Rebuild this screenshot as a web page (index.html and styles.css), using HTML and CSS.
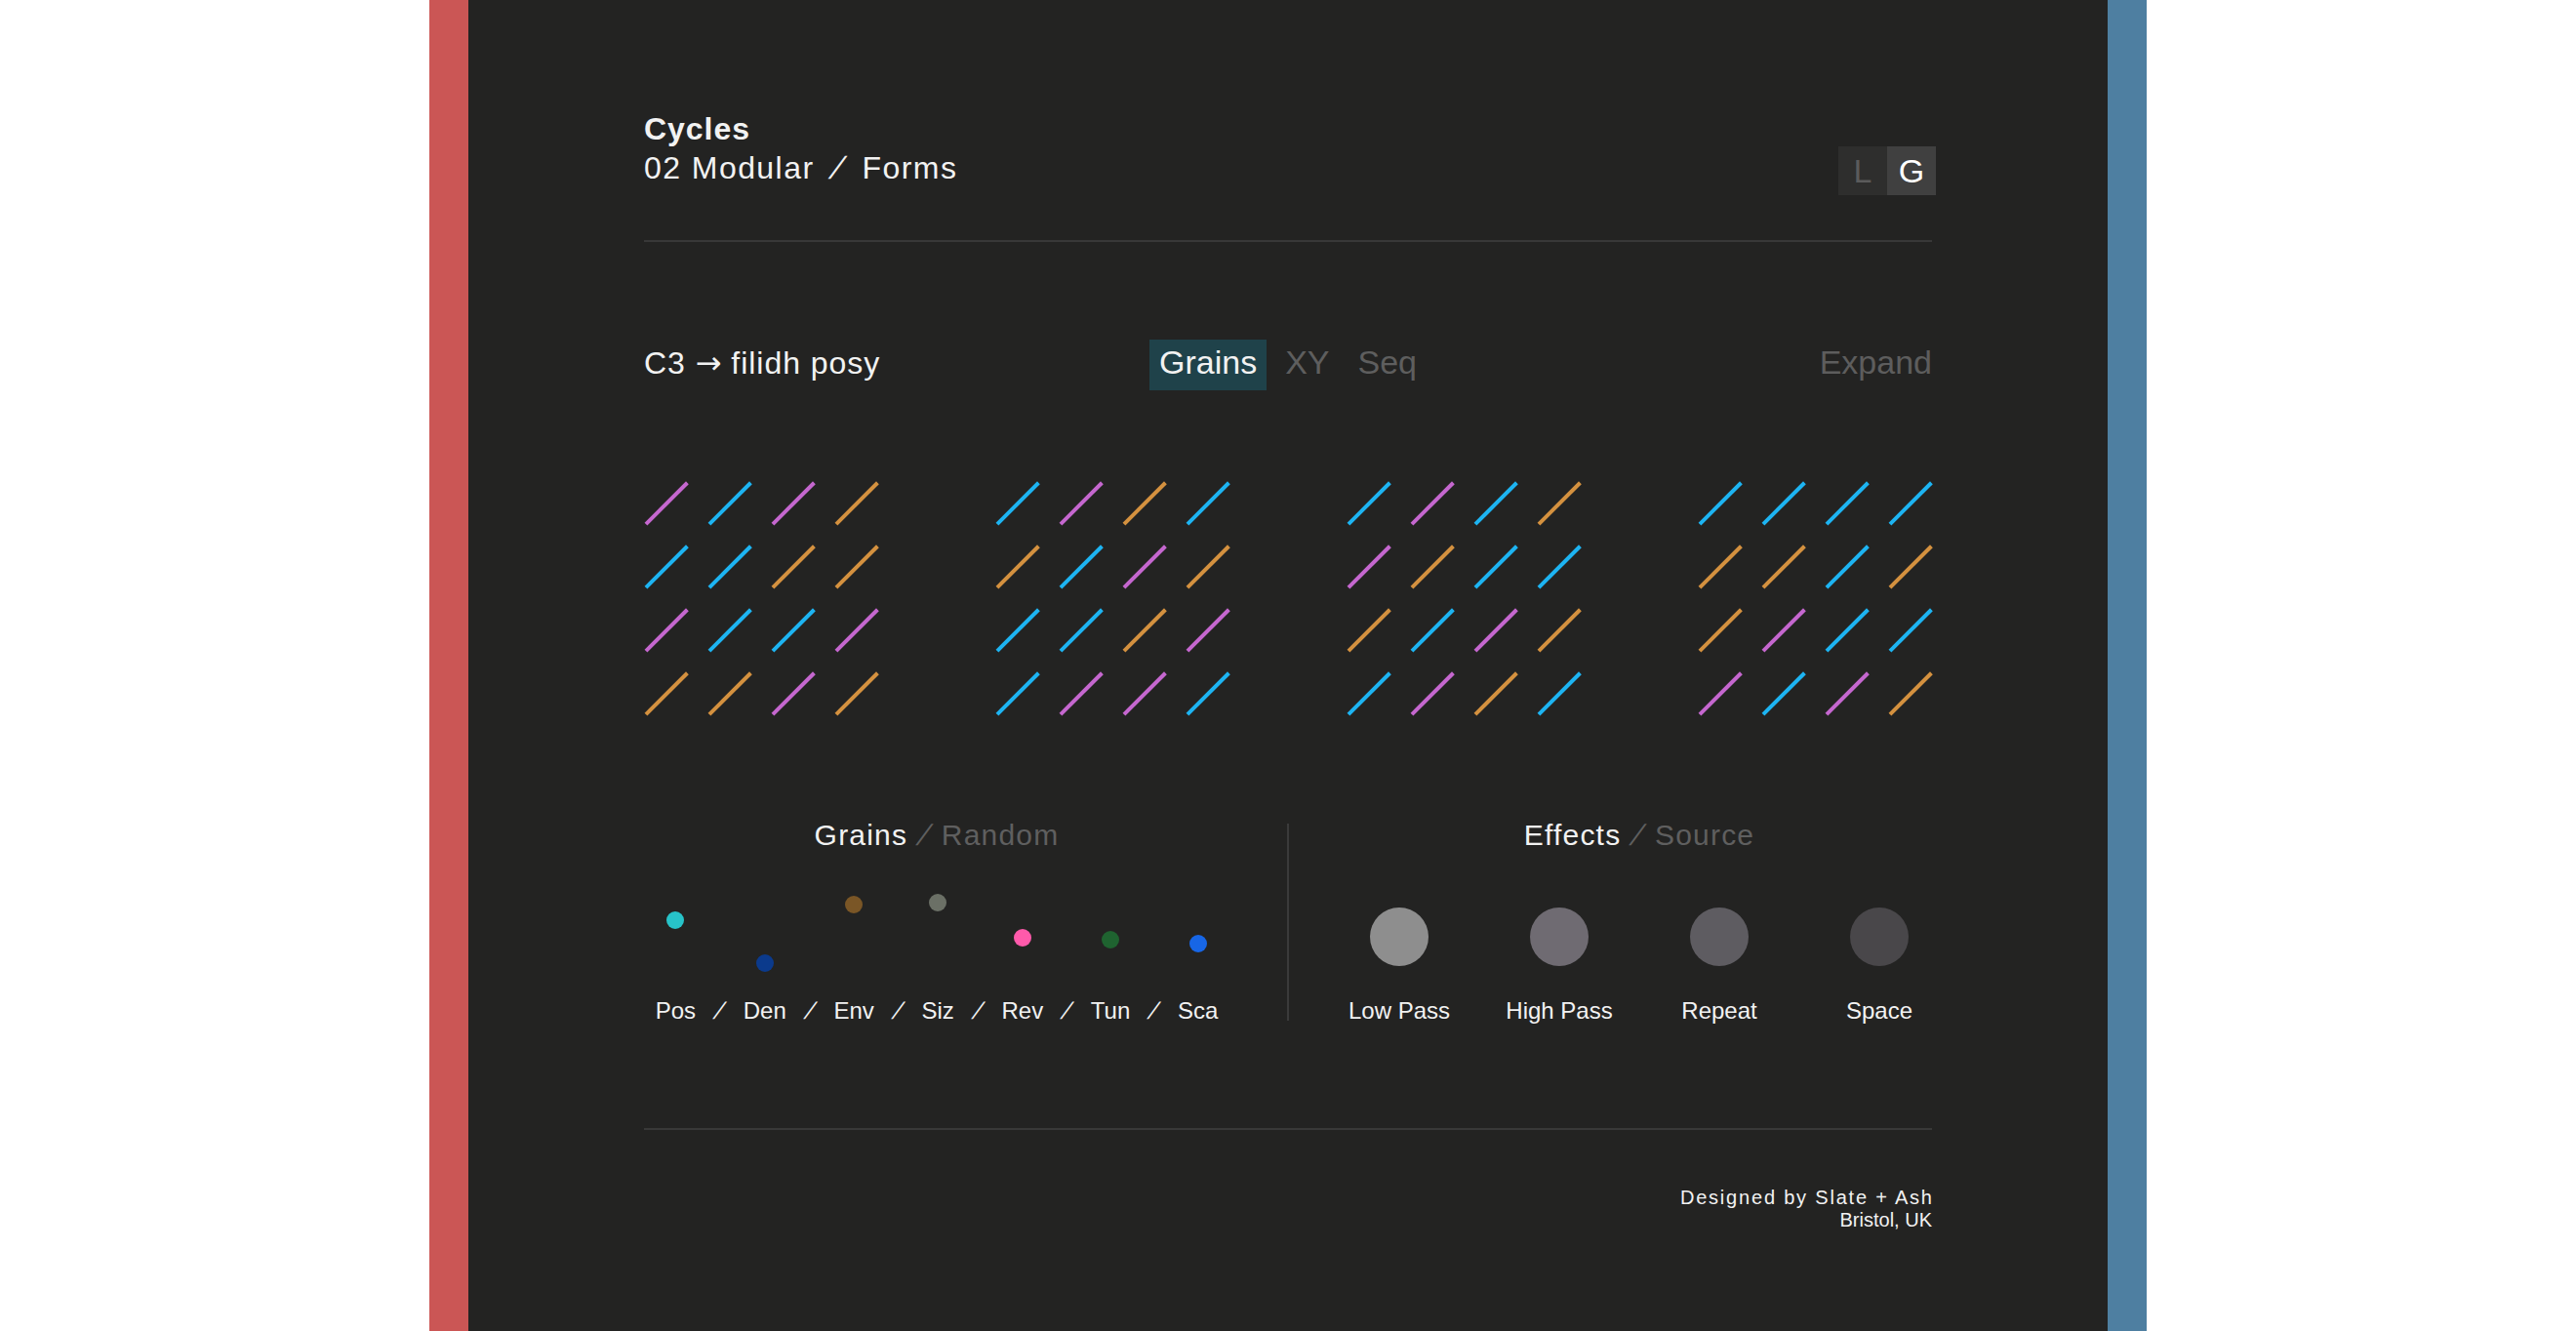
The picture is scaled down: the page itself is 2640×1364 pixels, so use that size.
FILE: index.html
```html
<!DOCTYPE html>
<html lang="en">
<head>
  <meta charset="UTF-8" />
  <title>Cycles - 02 Modular / Forms</title>
  <link rel="stylesheet" href="styles.css">
</head>
<body>

<div class="frame">

  <!-- Header -->
  <header class="head">
    <div class="title">
      <h1>Cycles</h1>
      <p>02 Modular <span class="sep">/</span> Forms</p>
    </div>
    <div class="mode">
      <span class="mode-btn">L</span>
      <span class="mode-btn is-on">G</span>
    </div>
  </header>

  <!-- Patch bar -->
  <section class="bar">
    <div class="patch">C3 <span class="arrow">→</span> filidh posy</div>
    <nav class="tabs">
      <span class="tab is-on">Grains</span>
      <span class="tab">XY</span>
      <span class="tab">Seq</span>
    </nav>
    <span class="expand">Expand</span>
  </section>

  <!-- Pads -->
  <section class="pads">
    <div class="pad">
      <i class="ln p"></i><i class="ln b"></i><i class="ln p"></i><i class="ln o"></i>
      <i class="ln b"></i><i class="ln b"></i><i class="ln o"></i><i class="ln o"></i>
      <i class="ln p"></i><i class="ln b"></i><i class="ln b"></i><i class="ln p"></i>
      <i class="ln o"></i><i class="ln o"></i><i class="ln p"></i><i class="ln o"></i>
    </div>
    <div class="pad">
      <i class="ln b"></i><i class="ln p"></i><i class="ln o"></i><i class="ln b"></i>
      <i class="ln o"></i><i class="ln b"></i><i class="ln p"></i><i class="ln o"></i>
      <i class="ln b"></i><i class="ln b"></i><i class="ln o"></i><i class="ln p"></i>
      <i class="ln b"></i><i class="ln p"></i><i class="ln p"></i><i class="ln b"></i>
    </div>
    <div class="pad">
      <i class="ln b"></i><i class="ln p"></i><i class="ln b"></i><i class="ln o"></i>
      <i class="ln p"></i><i class="ln o"></i><i class="ln b"></i><i class="ln b"></i>
      <i class="ln o"></i><i class="ln b"></i><i class="ln p"></i><i class="ln o"></i>
      <i class="ln b"></i><i class="ln p"></i><i class="ln o"></i><i class="ln b"></i>
    </div>
    <div class="pad">
      <i class="ln b"></i><i class="ln b"></i><i class="ln b"></i><i class="ln b"></i>
      <i class="ln o"></i><i class="ln o"></i><i class="ln b"></i><i class="ln o"></i>
      <i class="ln o"></i><i class="ln p"></i><i class="ln b"></i><i class="ln b"></i>
      <i class="ln p"></i><i class="ln b"></i><i class="ln p"></i><i class="ln o"></i>
    </div>
  </section>

  <!-- Controls -->
  <section class="controls">
    <div class="col">
      <h2 class="col-title">Grains <span class="dim"><span class="sep">/</span> Random</span></h2>
      <div class="params">
        <div class="param"><div class="track"><span class="dot dot-pos" style="margin-top: 61px"></span></div><span class="param-label">Pos</span></div>
        <span class="sep">/</span>
        <div class="param"><div class="track"><span class="dot dot-den" style="margin-top: 105px"></span></div><span class="param-label">Den</span></div>
        <span class="sep">/</span>
        <div class="param"><div class="track"><span class="dot dot-env" style="margin-top: 45px"></span></div><span class="param-label">Env</span></div>
        <span class="sep">/</span>
        <div class="param"><div class="track"><span class="dot dot-siz" style="margin-top: 43px"></span></div><span class="param-label">Siz</span></div>
        <span class="sep">/</span>
        <div class="param"><div class="track"><span class="dot dot-rev" style="margin-top: 79px"></span></div><span class="param-label">Rev</span></div>
        <span class="sep">/</span>
        <div class="param"><div class="track"><span class="dot dot-tun" style="margin-top: 81px"></span></div><span class="param-label">Tun</span></div>
        <span class="sep">/</span>
        <div class="param"><div class="track"><span class="dot dot-sca" style="margin-top: 85px"></span></div><span class="param-label">Sca</span></div>
      </div>
    </div>

    <div class="vrule"></div>

    <div class="col">
      <h2 class="col-title">Effects <span class="dim"><span class="sep">/</span> Source</span></h2>
      <div class="fx">
        <div class="fx-item"><span class="knob knob-1"></span><span class="param-label">Low Pass</span></div>
        <div class="fx-item"><span class="knob knob-2"></span><span class="param-label">High Pass</span></div>
        <div class="fx-item"><span class="knob knob-3"></span><span class="param-label">Repeat</span></div>
        <div class="fx-item"><span class="knob knob-4"></span><span class="param-label">Space</span></div>
      </div>
    </div>
  </section>

  <footer class="credit">
    <p class="credit-by">Designed by Slate + Ash</p>
    <p>Bristol, UK</p>
  </footer>

</div>

</body>
</html>
```

FILE: styles.css
```css
* { box-sizing: border-box; }

body {
  margin: 0;
  background: #fff;
  font-family: 'Liberation Sans', Arial, sans-serif;
  color: #f2f2f2;
}

.frame {
  width: 1760px;
  min-height: 100vh;
  margin: 0 auto;
  padding: 0 180px;
  background: #232322;
  border-left: 40px solid #cb5655;
  border-right: 40px solid #4e7fa1;
}

/* header */
.head {
  display: flex;
  justify-content: space-between;
  align-items: flex-start;
  padding: 112px 0 46px;
  border-bottom: 2px solid #383838;
}

.title h1,
.title p {
  margin: 0;
  font-size: 32px;
  line-height: 40px;
  letter-spacing: 0.045em;
}

.title h1 { font-weight: 700; letter-spacing: 0.03em; }

.title .sep { margin: 0 9px; }

.sep {
  display: inline-block;
  transform: skewX(-25deg);
}

.mode {
  display: flex;
  margin-top: 38px;
  margin-right: -4px;
}

.mode-btn {
  width: 50px;
  height: 50px;
  line-height: 50px;
  text-align: center;
  font-size: 34px;
  background: #2e2e2d;
  color: #5b5b5b;
}

.mode-btn.is-on {
  background: #404040;
  color: #fff;
}

/* patch bar */
.bar {
  display: grid;
  grid-template-columns: 1fr auto 1fr;
  align-items: baseline;
  margin-top: 100px;
}

.patch {
  font-size: 32px;
  letter-spacing: 0.03em;
}

.arrow {
  font-family: 'DejaVu Sans', sans-serif;
  font-size: 32px;
  letter-spacing: 0;
}

.tabs {
  display: flex;
  gap: 9px;
}

.tab {
  font-size: 34px;
  line-height: 47px;
  padding: 0 10px 5px;
  color: #5e5e5e;
}

.tab.is-on {
  background: #1f424a;
  color: #f2f2f2;
}

.expand {
  justify-self: end;
  font-size: 34px;
  color: #5d5d5d;
}

/* pads */
.pads {
  display: flex;
  justify-content: space-between;
  margin-top: 93px;
}

.pad {
  display: grid;
  grid-template-columns: repeat(4, 45px);
  grid-auto-rows: 45px;
  gap: 20px;
}

.ln {
  display: flex;
  align-items: center;
  justify-content: center;
}

.ln::before {
  content: "";
  flex: none;
  width: 60px;
  height: 3.5px;
  background: currentColor;
  transform: rotate(-45deg);
}

.ln.p { color: #c567cf; }
.ln.b { color: #1db4f2; }
.ln.o { color: #d4913f; }

/* controls */
.controls {
  display: grid;
  grid-template-columns: 1fr 2px 1fr;
  column-gap: 59px;
  margin-top: 106px;
}

.vrule {
  background: #3a3a3a;
  margin: 5px 0 4px;
}

.col-title {
  margin: 0;
  font-size: 30px;
  line-height: 34px;
  font-weight: 400;
  text-align: center;
  letter-spacing: 0.04em;
}

.col-title .sep { margin: 0 3px; }

.dim { color: #5f5f5f; }

.params {
  display: flex;
  justify-content: center;
  gap: 21px;
}

.params .sep {
  align-self: flex-end;
  font-size: 24px;
  line-height: 28px;
}

.param {
  display: flex;
  flex-direction: column;
  align-items: center;
}

.track { height: 149px; }

.dot {
  display: block;
  width: 18px;
  height: 18px;
  border-radius: 50%;
}

.dot-pos { background: #27c3c9; }
.dot-den { background: #0b3a8c; }
.dot-env { background: #7a5626; }
.dot-siz { background: #6b7066; }
.dot-rev { background: #ff5aab; }
.dot-tun { background: #1f6330; }
.dot-sca { background: #1766e6; }

.param-label {
  font-size: 24px;
  line-height: 28px;
  white-space: nowrap;
}

.fx {
  display: grid;
  grid-template-columns: repeat(4, 108px);
  justify-content: space-between;
}

.fx-item {
  display: flex;
  flex-direction: column;
  align-items: center;
}

.knob {
  width: 60px;
  height: 60px;
  border-radius: 50%;
  margin: 57px 0 32px;
}

.knob-1 { background: #8e8e8e; }
.knob-2 { background: #6f6b72; }
.knob-3 { background: #5e5c61; }
.knob-4 { background: #49474a; }

/* footer */
.credit {
  margin-top: 106px;
  border-top: 2px solid #383838;
  padding-top: 58px;
  text-align: right;
  font-size: 20px;
  line-height: 23px;
}

.credit p { margin: 0; }

.credit-by {
  letter-spacing: 0.09em;
  margin-right: -0.09em !important;
}
```
